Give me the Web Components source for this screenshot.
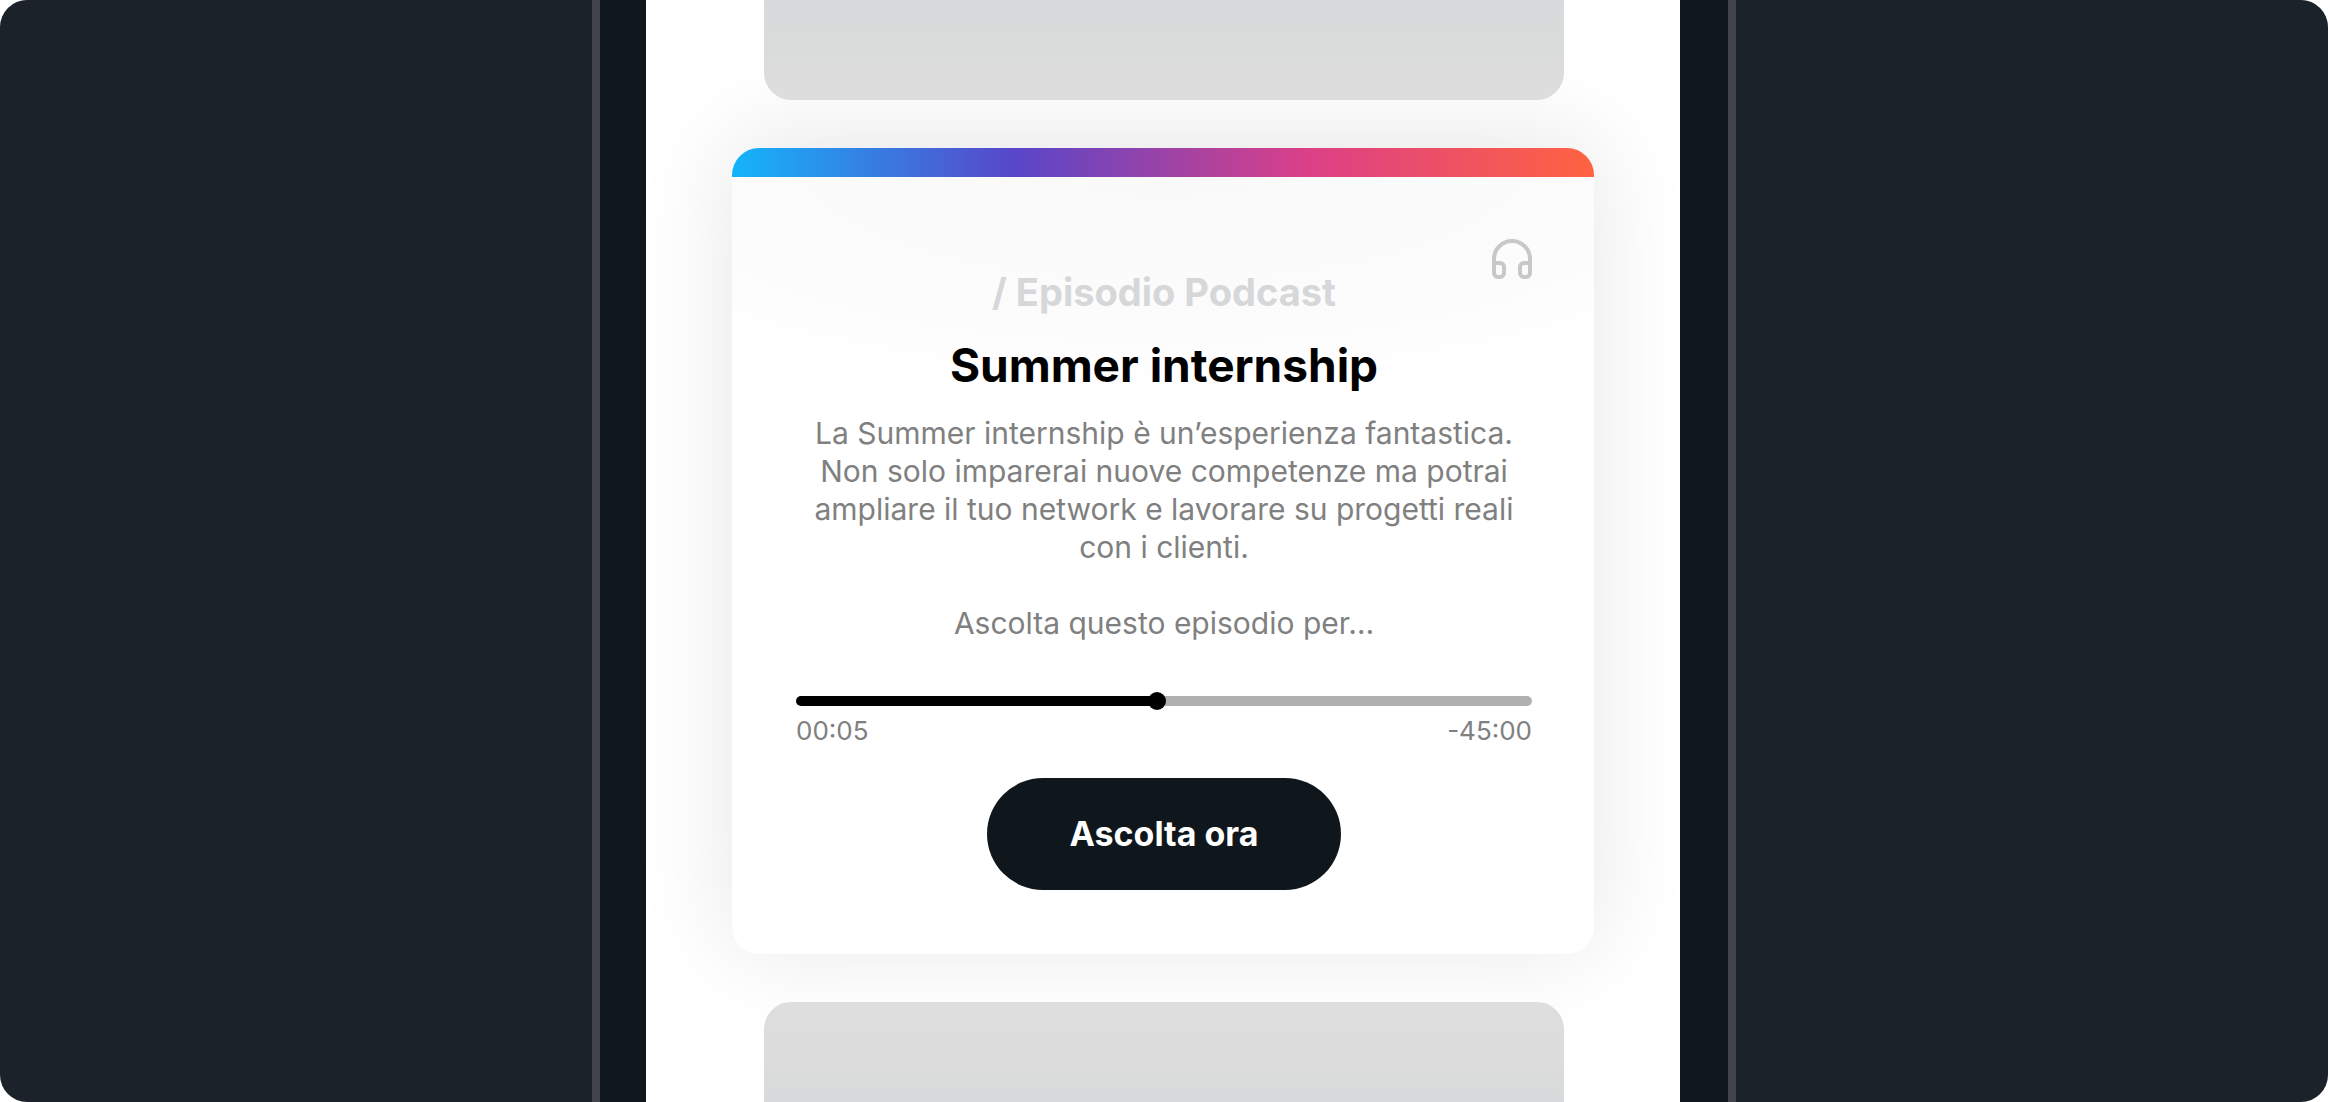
<!DOCTYPE html>
<html lang="it">
<head>
<meta charset="utf-8">
<meta name="viewport" content="width=device-width, initial-scale=1">
<title>Summer internship</title>
<style>
html, body { margin: 0; height: 100%; background: #fff; }
body { font-family: Inter, "Liberation Sans", sans-serif; }
</style>
</head>
<body>
<phone-stage>
  <feed-placeholder edge="top"></feed-placeholder>
  <podcast-card>
    <span slot="eyebrow">/ Episodio Podcast</span>
    <span slot="title">Summer internship</span>
    <p>La Summer internship è un’esperienza fantastica. Non solo imparerai nuove competenze ma potrai ampliare il tuo network e lavorare su progetti reali con i clienti.</p>
    <p>Ascolta questo episodio per…</p>
    <audio-progress slot="player" value="49" elapsed="00:05" remaining="-45:00"></audio-progress>
    <pill-button slot="action">Ascolta ora</pill-button>
  </podcast-card>
  <feed-placeholder edge="bottom"></feed-placeholder>
</phone-stage>

<script>
class PhoneStage extends HTMLElement {
  constructor() {
    super();
    this.attachShadow({ mode: "open" }).innerHTML = `
      <style>
        :host { display: flex; justify-content: center; height: 100vh; overflow: hidden;
          background: #1b2229; border-radius: 27px; }
        .frame { box-sizing: border-box; width: 100%; max-width: 1144px; display: flex;
          border: solid #42444d; border-width: 0 8px; padding: 0 48px 0 46px; background: #10171d; }
        main { flex: 1; min-width: 0; display: flex; flex-direction: column; gap: 48px;
          padding: 0 86px; overflow: hidden; background: #fff; }
      </style>
      <div class="frame"><main><slot></slot></main></div>`;
  }
}

class FeedPlaceholder extends HTMLElement {
  constructor() {
    super();
    this.attachShadow({ mode: "open" }).innerHTML = `
      <style>
        :host { display: block; flex: 1; margin: 0 30px 0 32px; position: relative; z-index: 1; }
        :host([edge="top"]) { border-radius: 0 0 27px 27px; background: linear-gradient(#d8d9db, #dadcdb 50%, #dddddd); }
        :host([edge="bottom"]) { border-radius: 27px 27px 0 0; background: linear-gradient(#dddedd, #dcdcdc 50%, #dadcdb 75%, #d8d9db); }
      </style>`;
  }
}

class PodcastCard extends HTMLElement {
  constructor() {
    super();
    this.attachShadow({ mode: "open" }).innerHTML = `
      <style>
        :host { display: block; border-radius: 27px; box-shadow: 0 -8px 100px rgba(0, 0, 0, .1); }
        article { border-radius: 27px; overflow: hidden;
          background: radial-gradient(ellipse 80% 246px at 50% 0, #f9f9f9, #fcfcfc 75%, #fff) #fff; }
        .bar { height: 29px; background: linear-gradient(90deg, #14b4fa, #5946c8 33%, #dc4087 67%, #ff6340); }
        .body { padding: 62px 62px 64px 64px; display: flex; flex-direction: column; text-align: center; }
        header { display: grid; }
        header > * { grid-area: 1 / 1; }
        svg { justify-self: end; width: 40px; height: 40px; }
        .eyebrow { margin: 29px 0 0; font-size: 38px; line-height: 48px; font-weight: 700; color: #d6d7d9; }
        h1 { margin: 21px 0; font-size: 46px; line-height: 56px; font-weight: 700; color: #000; }
        .copy { display: flex; flex-direction: column; gap: 38px; font-size: 30px; line-height: 38px; color: #808080; }
        ::slotted(p) { margin: 0; }
        .player { margin-top: 50px; }
        .action { margin-top: 31px; }
      </style>
      <article>
        <div class="bar"></div>
        <div class="body">
          <header>
            <p class="eyebrow"><slot name="eyebrow"></slot></p>
            <svg viewBox="2 2 20 20" fill="none" stroke="#c8c8c8" stroke-width="2" stroke-linecap="round" stroke-linejoin="round" aria-hidden="true">
              <path d="M3 18v-6a9 9 0 0 1 18 0v6"/>
              <path d="M21 19a2 2 0 0 1-2 2h-1a2 2 0 0 1-2-2v-3a2 2 0 0 1 2-2h3zM3 19a2 2 0 0 0 2 2h1a2 2 0 0 0 2-2v-3a2 2 0 0 0-2-2H3z"/>
            </svg>
          </header>
          <h1><slot name="title"></slot></h1>
          <div class="copy"><slot></slot></div>
          <div class="player"><slot name="player"></slot></div>
          <div class="action"><slot name="action"></slot></div>
        </div>
      </article>`;
  }
}

class AudioProgress extends HTMLElement {
  connectedCallback() {
    if (this.shadowRoot) return;
    const value = this.getAttribute("value");
    this.attachShadow({ mode: "open" }).innerHTML = `
      <style>
        :host { display: block; --value: ${value}%; }
        input { display: block; appearance: none; -webkit-appearance: none; width: 100%; height: 18px; margin: 0; background: none; }
        input::-webkit-slider-runnable-track { height: 10px; border-radius: 5px;
          background: linear-gradient(90deg, #000 var(--value), #b0b0b0 var(--value)); }
        input::-webkit-slider-thumb { -webkit-appearance: none; width: 18px; height: 18px; margin-top: -4px;
          border-radius: 50%; background: #000; }
        .times { display: flex; justify-content: space-between; margin-top: 5px;
          font-size: 26px; line-height: 32px; color: #808080; }
      </style>
      <input type="range" min="0" max="100" value="${value}" aria-label="Posizione">
      <div class="times"><span>${this.getAttribute("elapsed")}</span><span>${this.getAttribute("remaining")}</span></div>`;
    const input = this.shadowRoot.querySelector("input");
    input.addEventListener("input", () => this.style.setProperty("--value", input.value + "%"));
  }
}

class PillButton extends HTMLElement {
  constructor() {
    super();
    this.attachShadow({ mode: "open" }).innerHTML = `
      <style>
        :host { display: flex; justify-content: center; }
        button { min-width: 354px; padding: 34px 56px; border: 0; border-radius: 56px; background: #10171c;
          color: #fff; font-family: inherit; font-size: 34px; line-height: 44px; font-weight: 700; cursor: pointer; }
      </style>
      <button type="button"><slot></slot></button>`;
  }
}

customElements.define("phone-stage", PhoneStage);
customElements.define("feed-placeholder", FeedPlaceholder);
customElements.define("podcast-card", PodcastCard);
customElements.define("audio-progress", AudioProgress);
customElements.define("pill-button", PillButton);
</script>
</body>
</html>
